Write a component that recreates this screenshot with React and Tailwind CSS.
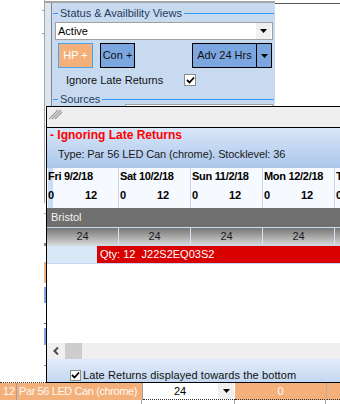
import React from "react";

function Arrow() {
  return (
    <svg width="7" height="4" viewBox="0 0 7 4">
      <path d="M0 0H7L3.5 4Z" fill="#000" />
    </svg>
  );
}

function Check({ size = 12 }) {
  return (
    <div
      className="shrink-0 bg-white border border-[#8a8a8a] flex items-center justify-center"
      style={{ width: size, height: size }}
    >
      <svg width="9" height="8" viewBox="0 0 9 8">
        <path d="M1 4L3.5 6.5L8 1.5" stroke="#000" strokeWidth="1.8" fill="none" />
      </svg>
    </div>
  );
}

function GroupHeader({ label }) {
  return (
    <div className="flex items-center h-[12px] pr-[1px]">
      <div className="ml-px w-[5px] h-px bg-[#3399ff]" />
      <span className="px-[2px] text-[#1e3a5f] whitespace-nowrap">{label}</span>
      <div className="flex-1 h-px bg-[#3399ff]" />
    </div>
  );
}

const days = ["Fri 9/2/18", "Sat 10/2/18", "Sun 11/2/18", "Mon 12/2/18", "Tue 13/2/18"];

export default function App() {
  return (
    <div className="w-[340px] h-[404px] overflow-hidden bg-white text-[11px] leading-none text-black font-['Liberation_Sans',Arial,sans-serif] flex flex-col">
      {/* Top: options panel */}
      <div className="flex h-[106px] shrink-0">
        <div className="w-[45px] shrink-0 border-r border-[#a5a5a5] flex flex-col items-end">
          <div className="mt-[10px] w-[2px] h-px bg-[#a5a5a5]" />
          <div className="mt-[22px] w-[2px] h-px bg-[#a5a5a5]" />
        </div>
        <div className="w-[230px] shrink-0 mt-px border-t-2 border-[#a4a4a4] flex">
          <div className="w-[6px] shrink-0 bg-[#dde5ee]" />
          <div className="w-px shrink-0 bg-[#7d858f]" />
          <div className="flex-1 bg-[#c7daf0] flex flex-col overflow-hidden">
            <div className="mt-[4px]">
              <GroupHeader label="Status & Availbility Views" />
            </div>
            <div className="mt-[3px] ml-[3px] w-[218px] h-[18px] shrink-0 bg-white border border-[#a0a0a0] flex items-center">
              <span className="pl-[2px] flex-1">Active</span>
              <div className="w-[15px] h-full mr-px bg-[#f0f0f0] flex items-center justify-center">
                <Arrow />
              </div>
            </div>
            <div className="mt-[3px] h-[25px] shrink-0 flex">
              <div className="ml-[6px] w-[35px] bg-[#f4b07b] border border-[#4aa3ef] text-white flex items-center justify-center">
                HP +
              </div>
              <div className="ml-[7px] w-[35px] bg-[#7ba6e0] border border-black flex items-center justify-center text-[#111]">
                Con +
              </div>
              <div className="ml-[57px] w-[80px] flex border border-black bg-[#7ba6e0] text-[#111]">
                <div className="flex-1 flex items-center justify-center border-r border-black">Adv 24 Hrs</div>
                <div className="w-[14px] flex items-center justify-center">
                  <Arrow />
                </div>
              </div>
            </div>
            <div className="mt-[6px] h-[12px] shrink-0 flex items-center">
              <span className="ml-[14px] w-[118px] text-[#111]">Ignore Late Returns</span>
              <Check />
            </div>
            <div className="mt-[7px]">
              <GroupHeader label="Sources" />
            </div>
            <div className="-mt-[1px] ml-[73px] w-[148px] h-[4px] shrink-0 bg-white border-t border-x border-[#a0a0a0]" />
          </div>
        </div>
        <div className="flex-1 mt-[3px] border-t border-[#555]" />
      </div>

      {/* Middle: popup over grid */}
      <div className="flex h-[277px] shrink-0">
        <div className="w-[46px] shrink-0 flex border-b border-dotted border-[#333]">
          <div className="w-[44px] shrink-0" />
          <div className="w-[2px] shrink-0 flex flex-col">
            <div className="h-[97px] border-l border-[#a5a5a5]" />
            <div className="h-[10px]" />
            <div className="h-px bg-[#a5a5a5]" />
            <div className="h-[29px]" />
            <div className="h-[3px] bg-[#888]" />
            <div className="h-[16px]" />
            <div className="h-[21px] bg-[#f3b07b]" />
            <div className="h-[4px]" />
            <div className="h-[16px] bg-[#7ba6e0]" />
            <div className="h-[20px]" />
            <div className="h-px bg-[#666]" />
            <div className="h-[4px]" />
            <div className="h-[17px] bg-[#7ba6e0]" />
            <div className="h-[20px]" />
            <div className="h-px bg-[#888]" />
          </div>
        </div>

        <div className="w-[310px] shrink-0 border-t border-l border-b border-black flex flex-col bg-white overflow-hidden">
          {/* title bar */}
          <div className="h-[21px] shrink-0 bg-[#efefef] border-b border-black">
            <svg width="14" height="11" viewBox="0 0 14 11" className="ml-[2px] mt-[2px]">
              <path d="M0 10L9 1M3 10L12 1M6 10L13 3" stroke="#9a9a9a" strokeWidth="1.2" />
            </svg>
          </div>
          {/* header */}
          <div className="h-[40px] shrink-0 bg-linear-to-b from-[#d9e7f8] to-[#abc6eb] flex flex-col">
            <div className="h-[14px] flex items-center pl-[3px] font-bold text-[12px] text-[#ff0000] whitespace-nowrap">
              - Ignoring Late Returns
            </div>
            <div className="h-[14px] mt-[5px] flex items-center pl-[11px] text-[#1a1a1a] tracking-[-0.1px] whitespace-nowrap">
              Type: Par 56 LED Can (chrome). Stocklevel: 36
            </div>
          </div>
          {/* dates */}
          <div className="h-[40px] shrink-0 flex bg-[#f6f9fd]">
            {days.map((d, i) => (
              <div
                key={d}
                className={
                  "w-[72px] shrink-0 border-r border-[#c5d8ef] flex flex-col " +
                  (i === 0
                    ? "bg-[linear-gradient(90deg,#f6f9fd_1px,#c9dcf3_1px,#c9dcf3_6px,#f6f9fd_6px)]"
                    : "")
                }
              >
                <div className="h-[14px] mt-[1px] flex items-center pl-[1px] font-bold tracking-[-0.3px] whitespace-nowrap">
                  {d}
                </div>
                <div className="h-[14px] mt-[5px] flex items-center pl-[1px] font-bold">
                  <span className="w-[37px]">0</span>
                  <span>12</span>
                </div>
              </div>
            ))}
          </div>
          {/* Bristol */}
          <div className="h-[20px] shrink-0 bg-[#6f6f6f] border-b border-[#c9dbf1] flex items-center pl-[4px] text-[#f2f2f2]">
            Bristol
          </div>
          {/* 24 row */}
          <div className="h-[18px] shrink-0 flex border-b border-[#c9dbf1]">
            {days.map((d) => (
              <div
                key={d}
                className="w-[72px] shrink-0 border-r border-[#d5e3f4] bg-linear-to-b from-[#767676] to-[#d8d8d8] flex items-center justify-center text-[#1a1a1a]"
              >
                24
              </div>
            ))}
          </div>
          {/* booking row */}
          <div className="h-[18px] shrink-0 border-b border-[#c3d7f0] bg-[#dae7f7] pl-[50px] flex">
            <div className="flex-1 bg-[#d80000] text-white flex items-center pl-[3px] whitespace-pre">
              {"Qty: 12  J22S2EQ03S2"}
            </div>
          </div>
          {/* empty */}
          <div className="h-[79px] shrink-0 bg-white" />
          {/* scrollbar */}
          <div className="h-[16px] shrink-0 bg-[#efefef] flex items-center">
            <svg width="6" height="8" viewBox="0 0 6 8" className="ml-[6px]">
              <path d="M5 0.5L1.5 4L5 7.5" stroke="#4a4a4a" strokeWidth="2" fill="none" />
            </svg>
            <div className="ml-[6px] w-[17px] h-full bg-[#cdcdcd]" />
          </div>
          {/* bottom option */}
          <div className="h-[23px] shrink-0 bg-linear-to-b from-[#e3ecf9] to-[#c4d8f1] pt-[10px]">
            <div className="h-[12px] flex items-center">
              <div className="ml-[23px]">
                <Check size={11} />
              </div>
              <span className="ml-[2px] text-[#111] tracking-[0.1px] whitespace-nowrap">Late Returns displayed towards the bottom</span>
            </div>
          </div>
        </div>
      </div>

      {/* Bottom grid row */}
      <div className="h-[17px] shrink-0 flex bg-[#f3b07b]">
        <div className="w-[17px] shrink-0 border-r border-[#a0a0a0] flex items-center pl-[3px] text-[#fff8f0]">12</div>
        <div className="w-[126px] shrink-0 border-r border-[#a0a0a0] flex items-center pl-[2px] text-[#fff8f0] tracking-[-0.4px] whitespace-nowrap">
          Par 56 LED Can (chrome)
        </div>
        <div className="w-[92px] shrink-0 bg-white border-b border-dotted border-[#333] flex items-center">
          <span className="pl-[31px] flex-1">24</span>
          <div className="w-[16px] h-full mr-px bg-[#efefef] flex items-center justify-center">
            <Arrow />
          </div>
        </div>
        <div className="w-[92px] shrink-0 border-r border-b border-dotted border-r-[#a0a0a0] border-b-[#333] flex items-center justify-center text-white">
          0
        </div>
        <div className="flex-1 border-b border-dotted border-[#333]" />
      </div>
      <div className="h-[4px] shrink-0 flex">
        <div className="w-[142px] shrink-0 border-r border-[#a0a0a0]" />
        <div className="w-[93px] shrink-0 border-r border-[#a0a0a0]" />
        <div className="w-[91px] shrink-0 border-r border-[#a0a0a0]" />
      </div>
    </div>
  );
}
